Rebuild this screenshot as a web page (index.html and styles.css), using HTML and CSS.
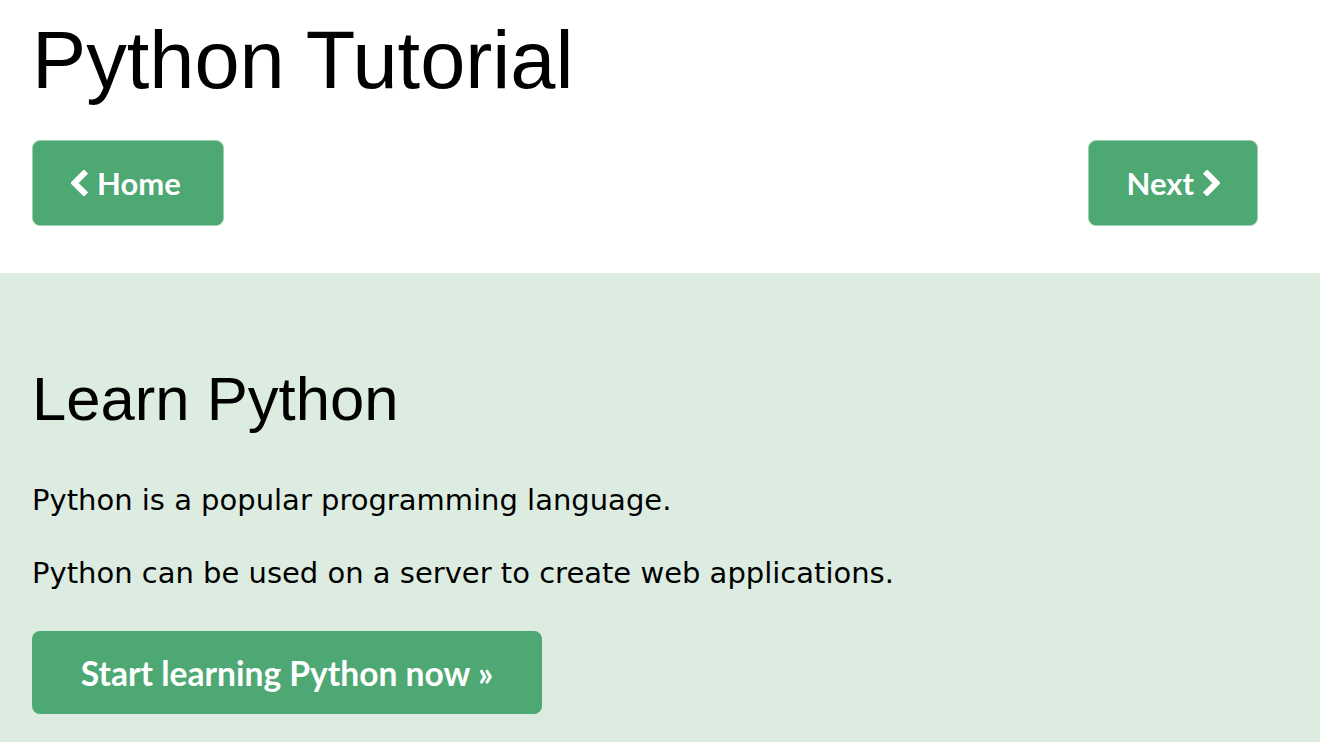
FILE: index.html
```html
<!DOCTYPE html>
<html lang="en">
<head>
<meta charset="utf-8">
<title>Python Tutorial</title>
<link rel="stylesheet" href="styles.css">
</head>
<body>
<header class="top">
  <h1 class="title">Python Tutorial</h1>
  <nav class="nav">
    <a class="btn nav-btn nav-home" href="#"><svg class="chev" viewBox="0 0 17 26" aria-hidden="true"><polyline points="15,1.5 3.5,13 15,24.5"/></svg>Home</a>
    <a class="btn nav-btn" href="#">Next<svg class="chev" viewBox="0 0 17 26" aria-hidden="true"><polyline points="2,1.5 13.5,13 2,24.5"/></svg></a>
  </nav>
</header>
<section class="band">
  <h2 class="heading">Learn Python</h2>
  <p class="text">Python is a popular programming language.</p>
  <p class="text">Python can be used on a server to create web applications.</p>
  <a class="btn start-btn" href="#">Start learning Python now &raquo;</a>
</section>
</body>
</html>
```
FILE: styles.css
```css
html, body {
  margin: 0;
  padding: 0;
  background: #ffffff;
}
body {
  font-family: "DejaVu Sans", Verdana, sans-serif;
  color: #000;
}
.top {
  padding: 16px 62px 47px 32px;
}
.title {
  font-family: "Liberation Sans", Arial, sans-serif;
  font-weight: normal;
  font-size: 81.2px;
  line-height: 89px;
  margin: 0 0 35px 0;
}
.nav {
  display: flex;
  justify-content: space-between;
}
.btn {
  display: inline-flex;
  align-items: center;
  justify-content: center;
  box-sizing: border-box;
  background: #4ea874;
  color: #ffffff;
  text-decoration: none;
  font-family: "Lato", "Open Sans", sans-serif;
  font-weight: 700;
  border-radius: 8px;
}
.nav-btn {
  height: 86px;
  padding: 0 37px 0 38px;
  font-size: 31px;
  gap: 9px;
  border: 1px solid #9ccfb0;
}
.nav-home {
  padding-left: 38px;
  padding-right: 42px;
}
.chev {
  flex: 0 0 auto;
  width: 17px;
  height: 26px;
  fill: none;
  stroke: #ffffff;
  stroke-width: 6;
  stroke-linecap: butt;
  stroke-linejoin: miter;
}
.band {
  background: #ddece1;
  padding: 90px 32px 28px 32px;
  min-height: 469px;
  box-sizing: border-box;
}
.heading {
  font-family: "Liberation Sans", Arial, sans-serif;
  font-weight: normal;
  font-size: 61.6px;
  line-height: 72px;
  margin: 0 0 45px 0;
}
.text {
  font-size: 29px;
  line-height: 40px;
  margin: 0 0 33px 0;
}
.start-btn {
  width: 510px;
  height: 83px;
  font-size: 33.6px;
  margin-top: 5px;
}
```
